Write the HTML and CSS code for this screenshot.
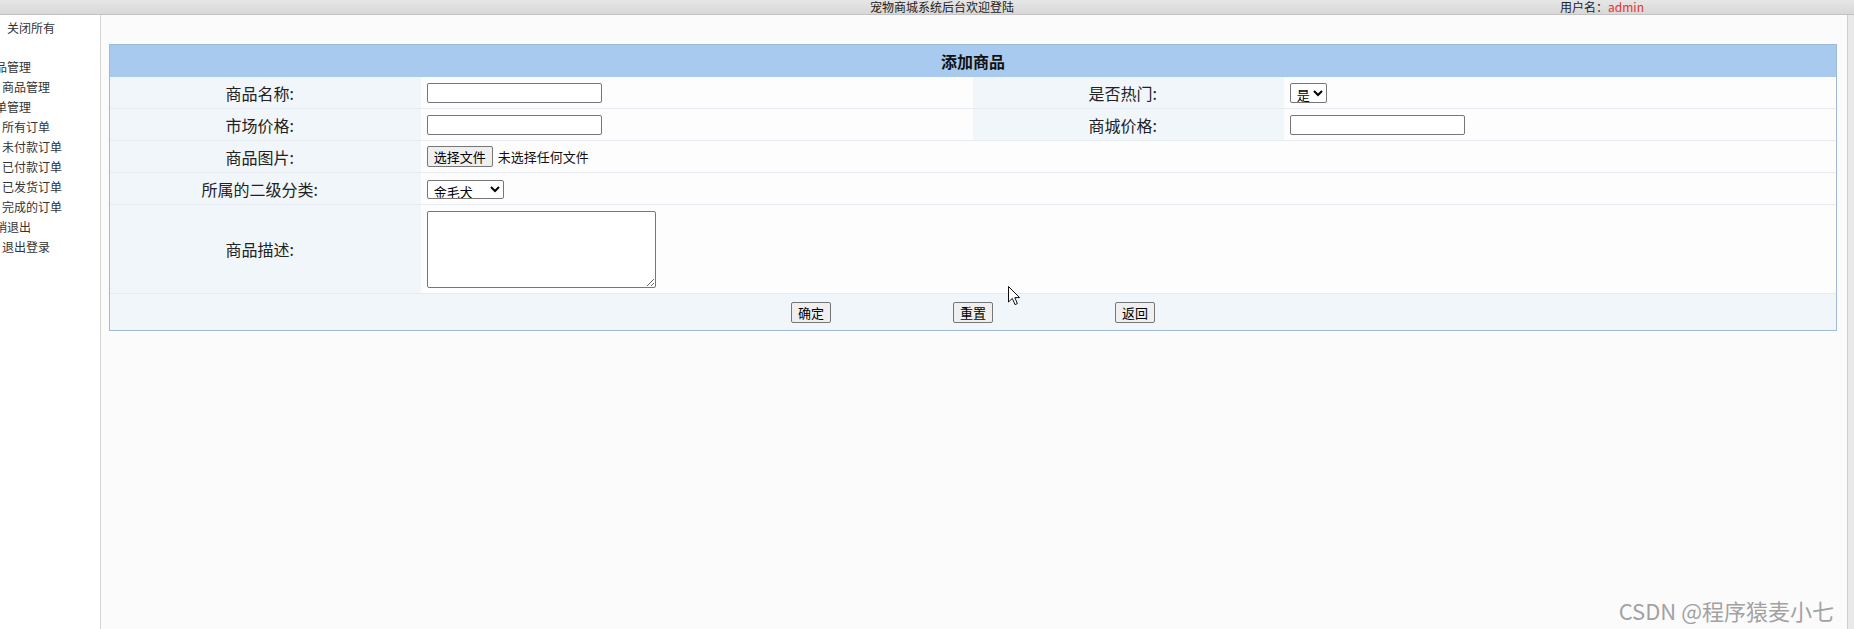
FILE: index.html
```html
<!DOCTYPE html>
<html lang="zh-CN">
<head>
    <meta charset="UTF-8">
    <title>宠物商城系统后台</title>
    <link rel="stylesheet" href="styles.css">
</head>
<body>
    <div class="topbar">
        <span class="site-title">宠物商城系统后台欢迎登陆</span>
        <span class="user-info">用户名：<em>admin</em></span>
    </div>
    <div class="frame">
        <aside class="sidebar">
            <div class="close-all">关闭所有</div>
            <ul class="tree">
                <li class="node">商品管理</li>
                <li class="leaf">商品管理</li>
                <li class="node">订单管理</li>
                <li class="leaf">所有订单</li>
                <li class="leaf">未付款订单</li>
                <li class="leaf">已付款订单</li>
                <li class="leaf">已发货订单</li>
                <li class="leaf">完成的订单</li>
                <li class="node">注销退出</li>
                <li class="leaf">退出登录</li>
            </ul>
        </aside>
        <main class="content">
            <form class="product-form">
                <table class="form-table">
                    <colgroup>
                        <col class="col-label">
                        <col class="col-value">
                        <col class="col-label">
                        <col class="col-value">
                    </colgroup>
                    <tr>
                        <td class="head" colspan="4">添加商品</td>
                    </tr>
                    <tr>
                        <td class="label">商品名称:</td>
                        <td class="value"><input type="text" class="text-input"></td>
                        <td class="label">是否热门:</td>
                        <td class="value">
                            <select class="select hot-select">
                                <option>是</option>
                                <option>否</option>
                            </select>
                        </td>
                    </tr>
                    <tr>
                        <td class="label">市场价格:</td>
                        <td class="value"><input type="text" class="text-input"></td>
                        <td class="label">商城价格:</td>
                        <td class="value"><input type="text" class="text-input"></td>
                    </tr>
                    <tr>
                        <td class="label">商品图片:</td>
                        <td class="value" colspan="3">
                            <span class="file-picker">
                                <button type="button" class="btn">选择文件</button>
                                <span class="file-name">未选择任何文件</span>
                            </span>
                        </td>
                    </tr>
                    <tr>
                        <td class="label">所属的二级分类:</td>
                        <td class="value" colspan="3">
                            <select class="select cat-select">
                                <option>金毛犬</option>
                            </select>
                        </td>
                    </tr>
                    <tr class="desc-row">
                        <td class="label">商品描述:</td>
                        <td class="value" colspan="3"><textarea class="desc-input"></textarea></td>
                    </tr>
                    <tr>
                        <td class="actions" colspan="4">
                            <div class="action-buttons">
                                <button type="submit" class="btn">确定</button>
                                <button type="reset" class="btn">重置</button>
                                <button type="button" class="btn">返回</button>
                            </div>
                        </td>
                    </tr>
                </table>
            </form>
        </main>
        <div class="gutter"></div>
    </div>

    <svg class="cursor" width="13" height="20" viewBox="0 0 13 20">
        <path d="M0.5 0.5 L0.5 16 L4.3 12.4 L7 18.6 L9.4 17.6 L6.8 11.6 L11.6 11.6 Z" fill="#fff" stroke="#111" stroke-width="1"/>
    </svg>
    <div class="watermark">CSDN @程序猿麦小七</div>
</body>
</html>
```

FILE: styles.css
```css
body {
    margin: 0;
    font-family: "Noto Sans CJK SC", "Noto Sans", sans-serif;
    background-color: #fbfbfb;
    color: #222;
    height: 629px;
    overflow: hidden;
}
.topbar {
    display: flex;
    height: 14px;
    line-height: 14px;
    padding-left: 870px;
    gap: 546px;
    font-size: 12px;
    color: #222;
    background: linear-gradient(#e6e6e6, #d8d8d8);
    border-bottom: 1px solid #c2c2c2;
    white-space: nowrap;
}
.user-info em {
    font-style: normal;
    color: #e5322d;
}
.frame {
    display: flex;
    height: 614px;
}
.sidebar {
    width: 100px;
    flex-shrink: 0;
    background-color: #fff;
    border-right: 1px solid #d6d6d6;
    overflow: hidden;
    padding-top: 4px;
    font-size: 12px;
    color: #333;
    white-space: nowrap;
}
.close-all {
    line-height: 18px;
    padding-left: 7px;
}
.tree {
    list-style: none;
    margin: 20px 0 0 -17px;
    padding: 0;
}
.tree li {
    line-height: 20px;
}
.tree .leaf {
    padding-left: 19px;
}
.content {
    flex: 1;
    padding: 29px 10px 0 8px;
}
.gutter {
    width: 6px;
    flex-shrink: 0;
    background-color: #e9e9e9;
    border-left: 1px solid #cfcfcf;
}
.form-table {
    width: 100%;
    border: 1px solid #9fbad6;
    border-spacing: 0;
    table-layout: fixed;
}
.col-label {
    width: 18%;
}
.col-value {
    width: 32%;
}
.form-table td {
    height: 31px;
    padding: 0 6px;
    border-bottom: 1px solid #e6ecf2;
    vertical-align: middle;
}
.form-table tr:last-child td {
    border-bottom: none;
}
.form-table td.head {
    height: 32px;
    background-color: #a8caee;
    text-align: center;
    font-size: 16px;
    font-weight: bold;
    color: #111;
    border-bottom: none;
}
.form-table td.label {
    padding-right: 17px;
    background-color: #f1f6fb;
    text-align: center;
    font-size: 16px;
    color: #222;
}
.form-table td.value {
    background-color: #fdfdfd;
    font-size: 13px;
}
.desc-row td {
    height: 88px;
}
.form-table td.actions {
    height: 36px;
    background-color: #f1f6fb;
}
.text-input {
    box-sizing: border-box;
    width: 175px;
    height: 20px;
    margin: 0;
    padding: 1px 3px;
    border: 1px solid #767676;
    border-radius: 2px;
    background-color: #fff;
    font-size: 13px;
    vertical-align: middle;
}
.select {
    box-sizing: border-box;
    height: 19px;
    margin: 0;
    padding: 0 0 0 2px;
    border: 1px solid #767676;
    border-radius: 2px;
    background-color: #fff;
    font-family: "Noto Sans CJK SC", sans-serif;
    font-size: 13px;
    color: #000;
    vertical-align: middle;
}
.hot-select {
    width: 37px;
    height: 20px;
}
.cat-select {
    width: 77px;
}
.desc-input {
    box-sizing: border-box;
    display: block;
    width: 229px;
    height: 77px;
    margin: 0;
    border: 1px solid #767676;
    border-radius: 2px;
    background-color: #fff;
}
.file-picker {
    display: flex;
    align-items: center;
    gap: 5px;
}
.file-name {
    font-size: 13px;
    color: #111;
}
.btn {
    box-sizing: border-box;
    height: 21px;
    margin: 0;
    padding: 0 6px;
    border: 1px solid #767676;
    border-radius: 2px;
    background-color: #efefef;
    font-family: "Noto Sans CJK SC", sans-serif;
    font-size: 13px;
    line-height: 19px;
    color: #000;
}
.action-buttons {
    display: flex;
    justify-content: center;
    gap: 122px;
}
.action-buttons .btn {
    width: 40px;
    padding: 0;
}
.cursor {
    position: absolute;
    left: 1008px;
    top: 286px;
}
.watermark {
    position: absolute;
    right: 20px;
    top: 596px;
    font-size: 22px;
    line-height: 28px;
    color: #a2a2a2;
    text-shadow: 0 0 1px #fff;
}
```
